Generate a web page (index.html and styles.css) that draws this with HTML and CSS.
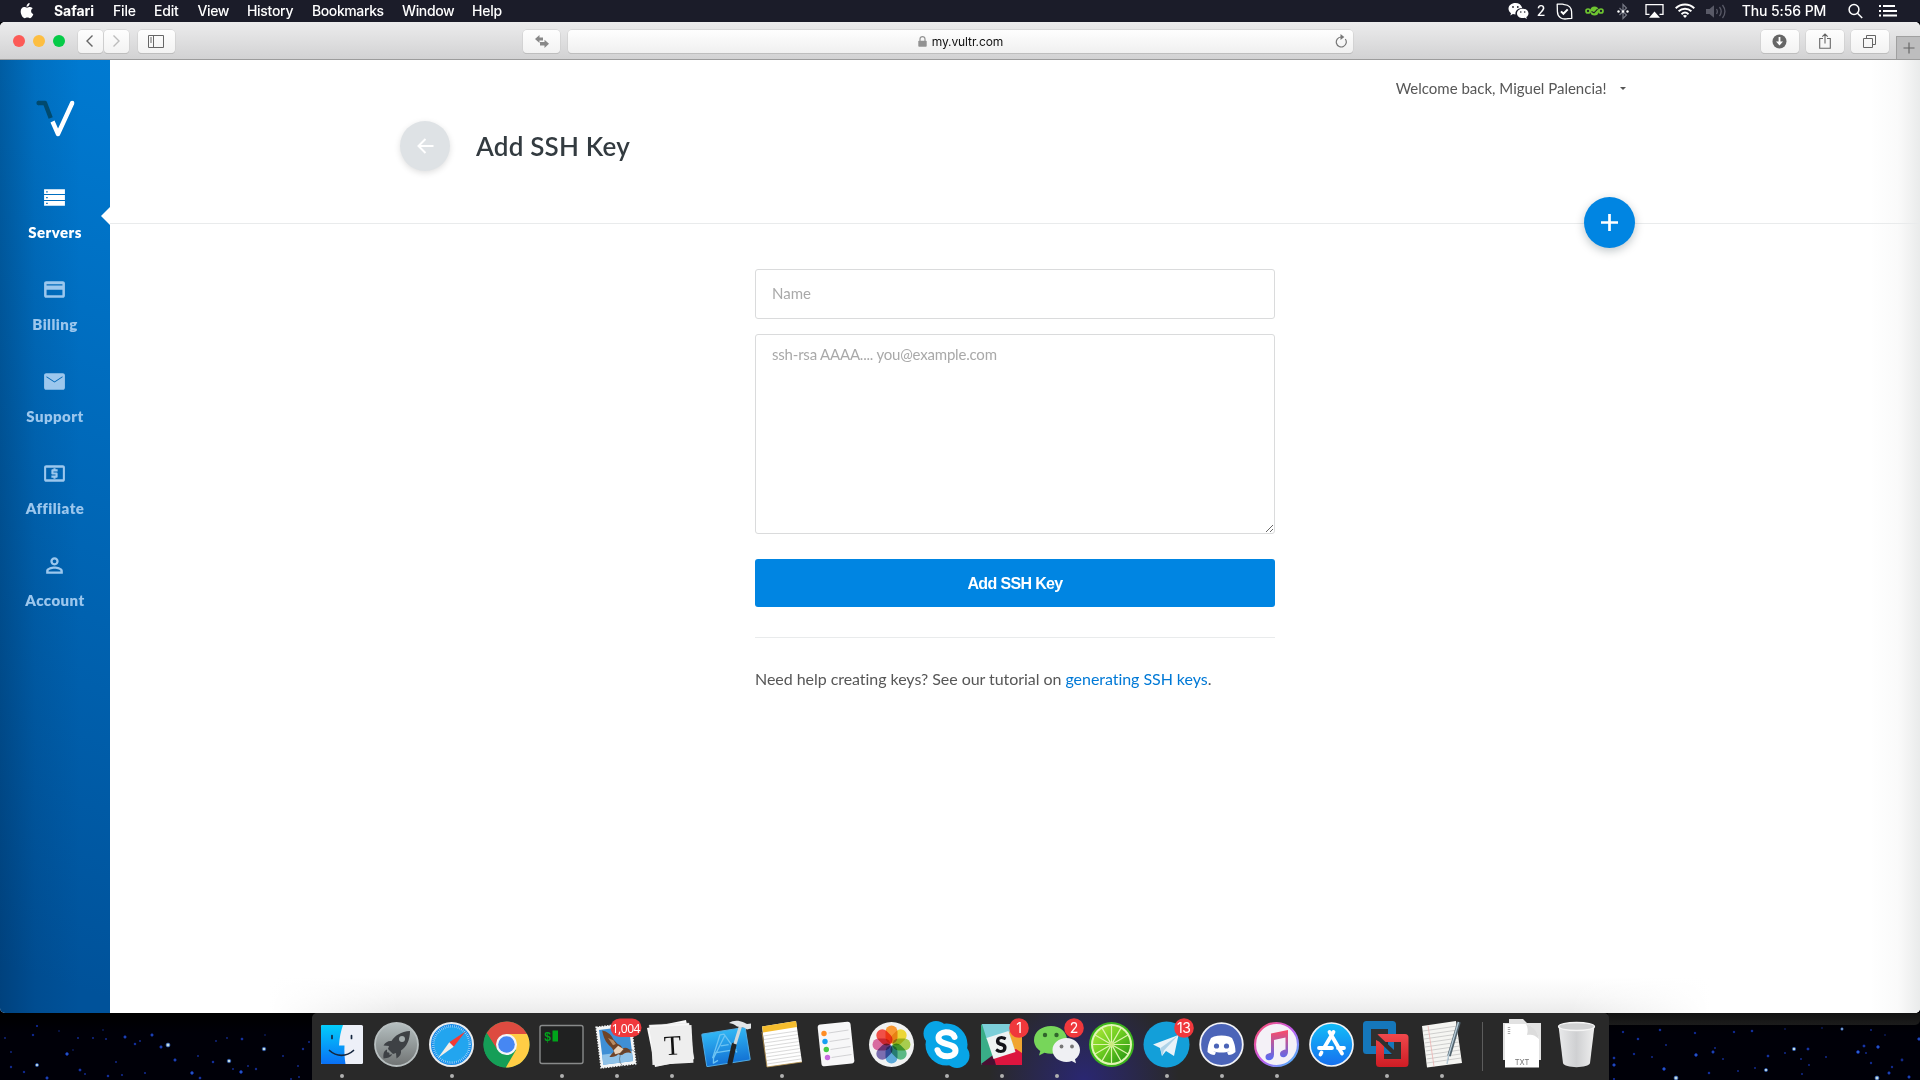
FILE: index.html
```html
<!DOCTYPE html>
<html lang="en">
<head>
<meta charset="utf-8">
<title>Add SSH Key - Vultr.com</title>
<link rel="stylesheet" href="styles.css">
</head>
<body>
<header class="menubar">
  <svg class="apple" width="14" height="16" viewBox="0 0 14 16"><path fill="#fff" d="M9.6 0c.1 1.100-.3 2-.9 2.700-.6.700-1.400 1.200-2.200 1.100-.1-1 .3-1.900.9-2.600C8 .5 8.900.1 9.600 0zM12.800 5.300c-1.100.7-1.700 1.600-1.700 2.800 0 1.500.8 2.600 2.200 3.100-.5 1.500-1.900 4-3.300 4-.9 0-1.400-.6-2.600-.6s-1.700.6-2.600.6C2.900 15.200.6 11.400.7 8.200.8 5.700 2.300 4.100 4.200 4c1.100 0 2 .7 2.900.7S9 3.900 10.200 4c1.100.1 2 .5 2.600 1.300z"/></svg>
  <nav class="menus">
    <b class="m-safari">Safari</b><span class="m-file">File</span><span class="m-edit">Edit</span><span class="m-view">View</span><span class="m-history">History</span><span class="m-bookmarks">Bookmarks</span><span class="m-window">Window</span><span class="m-help">Help</span>
  </nav>
  <div class="tray">
    <span class="t28"><svg width="21" height="18" viewBox="0 0 21 18"><path fill="#fff" d="M7.500 1C3.400 1 .5 3.600.5 6.800c0 1.800 1 3.300 2.500 4.400L2.300 13.400l2.600-1.300c.9.3 1.700.4 2.600.4C7 9 9.500 6 14.200 5.900 13.500 3 10.800 1 7.500 1z"/><path fill="#fff" d="M20.500 11.400c0-2.700-2.600-4.700-5.700-4.700S9 8.700 9 11.400s2.600 4.700 5.800 4.700c.7 0 1.400-.1 2-.3l2 1.100-.5-1.800c1.300-.9 2.200-2.200 2.200-3.700z"/><g fill="#1b1c29"><circle cx="5" cy="5" r=".9"/><circle cx="9.800" cy="5" r=".9"/><circle cx="12.800" cy="10" r=".8"/><circle cx="16.700" cy="10" r=".8"/></g></svg></span>
    <span class="t18">2</span>
    <span class="t30"><svg width="17" height="17" viewBox="0 0 17 17" fill="none" stroke="#fff" stroke-width="1.300"><path d="M1.200 1.200h5.300c.7 0 1.300.2 2 .4 4.300.2 7.300 3.200 7.100 7.600l.2 6.100-3.800.3c-6 1.500-10.500-1.500-10.600-7.100z" stroke-linejoin="round"/><path stroke-width="2" d="M5 8.400l2.400 2.400 4.300-4.400"/></svg></span>
    <span class="t29"><svg width="19" height="12" viewBox="0 0 19 12" fill="none" stroke="#6ec531" stroke-width="1.700"><circle cx="3" cy="6" r="2"/><circle cx="16" cy="6" r="2"/><circle cx="9.500" cy="6" r="4.500" fill="#6ec531" stroke="none"/><path stroke="#1b1c29" stroke-width="1.100" d="M6.500 6.500L9 7.800l3.600-3.600"/></svg></span>
    <span class="t29"><svg width="12" height="17" viewBox="0 0 12 17" fill="none" stroke="#777985" stroke-width="1.200"><path d="M2.500 5l7 7L6 15.500v-14L9.500 5l-7 7"/><g fill="#fff" stroke="none"><circle cx="1.500" cy="8.500" r="1.200"/><circle cx="6" cy="8.500" r="1.200"/><circle cx="10.500" cy="8.500" r="1.200"/></g></svg></span>
    <span class="t33"><svg width="19" height="16" viewBox="0 0 19 16"><path fill="none" stroke="#fff" stroke-width="1.300" d="M4.500 11.300H1V1.700h17v9.600h-3.500"/><path fill="#fff" d="M9.500 8.500l5.500 6.300H4z"/></svg></span>
    <span class="t29"><svg width="20" height="16" viewBox="0 0 20 16" fill="none" stroke="#fff" stroke-width="1.900"><path d="M.7 5.300c5.300-5 13.300-5 18.600 0M3.600 8.300c3.700-3.500 9.100-3.500 12.800 0M6.500 11.200c2.100-1.900 4.900-1.900 7 0"/><path fill="#fff" stroke="none" d="M7.900 12.700c1.300-1 2.900-1 4.200 0L10 15z"/></svg></span>
    <span class="t33"><svg width="21" height="17" viewBox="0 0 21 17" fill="none" stroke="#595a67" stroke-width="1.300"><path fill="#595a67" stroke="none" d="M0 6h3.500L8 2.200v12.600L3.500 11H0z"/><path d="M10.500 6c1 1.500 1 3.500 0 5M13.500 4c2 2.700 2 6.300 0 9M16.500 2c3 4 3 9 0 13"/></svg></span>
    <span class="t103 clock">Thu 5:56 PM</span>
    <span class="t39"><svg width="15" height="16" viewBox="0 0 15 16" fill="none" stroke="#fff" stroke-width="1.500"><circle cx="6" cy="6.500" r="4.900"/><path d="M9.500 10.200l4.700 4.900"/></svg></span>
    <span class="t26"><svg width="18" height="12" viewBox="0 0 18 12" fill="#fff"><path d="M0 0h2v2H0zM4 0h12v2H4zM0 5h2v2H0zM4 5h14v2H4zM0 9.500h2v2H0zM4 9.500h14v2H4z"/></svg></span>
  </div>
</header>

<div class="window">
  <div class="toolbar">
    <div class="lights"><i class="red"></i><i class="yellow"></i><i class="green"></i></div>
    <div class="navbtns">
      <span class="tb w25"><svg width="10" height="14" viewBox="0 0 10 14"><path fill="none" stroke="#666" stroke-width="1.400" d="M7.500 1.500L2 7l5.500 5.500"/></svg></span><span class="tb w25"><svg width="10" height="14" viewBox="0 0 10 14"><path fill="none" stroke="#bcbcbc" stroke-width="1.400" d="M2.500 1.500L8 7l-5.500 5.500"/></svg></span>
    </div>
    <span class="tb w38 sidebtn"><svg width="16" height="13" viewBox="0 0 16 13"><path fill="none" stroke="#666" d="M.5.500h15v12H.5zM5.500.500v12M2 3h2M2 5h2M2 7h2"/></svg></span>
    <span class="tb w38 swapbtn"><svg width="14" height="13" viewBox="0 0 14 13"><path fill="#888" d="M4.500 0v2.500H8v3H4.500V8L0 4zM9.500 4.800V7H5v3.500h4.500V13L14 8.800z"/></svg></span>
    <div class="url">
      <span class="addr"><svg width="9" height="11" viewBox="0 0 9 11"><path fill="none" stroke="#929292" stroke-width="1.200" d="M2 5V3a2.500 2.400 0 0 1 5 0v2"/><rect x=".3" y="4.700" width="8.400" height="6" rx=".8" fill="#929292"/></svg>my.vultr.com</span>
      <svg class="reload" width="12" height="14" viewBox="0 0 12 14"><path fill="none" stroke="#777" stroke-width="1.200" d="M10.300 5A5 5 0 1 1 6 3"/><path fill="#777" d="M5.500 0L9.300 3 5.500 6z"/></svg>
    </div>
    <div class="rightbtns">
      <span class="tb w39"><svg width="15" height="15" viewBox="0 0 15 15"><circle cx="7.500" cy="7.500" r="7" fill="#666"/><path fill="#fff" d="M6.600 3h1.800v4.500H11l-3.500 4-3.500-4h2.600z"/></svg></span>
      <span class="tb w39"><svg width="12" height="16" viewBox="0 0 12 16"><path fill="none" stroke="#666" stroke-width="1.100" d="M4 5.500H.7v9.800h10.600V5.500H8M6 10.500V1M3.300 3.700L6 1l2.700 2.700"/></svg></span>
      <span class="tb w39"><svg width="13" height="13" viewBox="0 0 13 13"><path fill="none" stroke="#666" d="M.5 3.500h9v9h-9zM3.500 3V.500h9v9H10"/></svg></span>
    </div>
    <span class="newtab"><svg width="12" height="12" viewBox="0 0 12 12"><path stroke="#666" stroke-width="1.200" d="M6 .5v11M.5 6h11"/></svg></span>
  </div>

  <div class="page">
    <aside class="sidebar">
      <svg class="logo" width="39" height="37" viewBox="0 0 39 37" fill="none" stroke-linejoin="round"><path stroke="#004a6e" stroke-width="4.400" d="M2.300 3H9l5.700 15" stroke-linecap="butt"/><circle cx="2.600" cy="3" r="2.200" fill="#004a6e"/><path stroke="#fff" stroke-width="4.400" d="M16.500 21.500L22 34l14.200-31"/><circle cx="36.200" cy="3" r="2.200" fill="#fff"/></svg>
      <nav class="sidenav">
        <a class="item active"><svg viewBox="0 0 24 24"><path d="M2 20h20v-4.700H2zm2-3h1.500v1.200H4zM2 4v4.700h20V4zm3.500 3.200H4V6h1.500zM2 14.400h20V9.700H2zm2-3h1.500v1.200H4z"/></svg>Servers</a>
        <a class="item"><svg viewBox="0 0 24 24"><path d="M20 4H4c-1.110 0-1.990.89-1.990 2L2 18c0 1.110.89 2 2 2h16c1.110 0 2-.89 2-2V6c0-1.110-.89-2-2-2zm-.4 13.500H4.400v-5.200h15.200zm0-9.300H4.400V6.900h15.200z"/></svg>Billing</a>
        <a class="item"><svg viewBox="0 0 24 24"><path d="M20 4H4c-1.100 0-2 .9-2 2v12c0 1.100.9 2 2 2h16c1.100 0 2-.9 2-2V6c0-1.100-.9-2-2-2zm-.3 4l-7.700 5-7.700-5V7l7.700 5 7.700-5z"/></svg>Support</a>
        <a class="item"><svg viewBox="0 0 24 24"><path d="M11 17h2v-1h1c.55 0 1-.45 1-1v-3c0-.55-.45-1-1-1h-3v-1h4V8h-2V7h-2v1h-1c-.55 0-1 .45-1 1v3c0 .55.45 1 1 1h3v1H9v2h2zm9-13H4c-1.110 0-1.990.89-1.990 2L2 18c0 1.110.89 2 2 2h16c1.110 0 2-.89 2-2V6c0-1.110-.89-2-2-2zm0 13.600H4V6.400h16z"/></svg>Affiliate</a>
        <a class="item"><svg viewBox="0 0 24 24"><path d="M12 6.200a1.800 1.800 0 1 1 0 3.600 1.800 1.800 0 0 1 0-3.600m0 9c2.970 0 5.700 1.260 5.700 1.900v.7H6.300v-.7c0-.64 2.730-1.900 5.700-1.900M12 4C9.790 4 8 5.790 8 8s1.790 4 4 4 4-1.790 4-4-1.790-4-4-4zm0 9c-2.670 0-8 1.340-8 4v3h16v-3c0-2.660-5.330-4-8-4z"/></svg>Account</a>
      </nav>
    </aside>
    <main class="main">
      <div class="head">
        <div class="container">
          <div class="welcome"><span>Welcome back, Miguel Palencia!</span><i class="caret"></i></div>
          <div class="titlerow">
            <a class="back"><svg width="17" height="16" viewBox="0 0 17 16"><path fill="none" stroke="#fff" stroke-width="2" d="M16.500 8H2M8.500 1L1.500 8l7 7"/></svg></a>
            <h1>Add SSH Key</h1>
          </div>
          <a class="fab"><svg width="17" height="17" viewBox="0 0 17 17"><path stroke="#fff" stroke-width="2.700" d="M8.500 0v17M0 8.500h17"/></svg></a>
        </div>
      </div>
      <form class="form">
        <input class="field" type="text" placeholder="Name">
        <textarea class="field area" placeholder="ssh-rsa AAAA.... you@example.com"></textarea>
        <button class="submit" type="button">Add SSH Key</button>
        <p class="help">Need help creating keys? See our tutorial on <a>generating SSH keys</a>.</p>
      </form>
    </main>
  </div>
</div>

<footer class="desktop">
  <svg class="stars" width="1920" height="67" viewBox="0 0 1920 67">
    <g fill="#122a8c">
      <circle cx="11" cy="39" r=".9"/><circle cx="5" cy="25" r=".9"/><circle cx="78" cy="25" r="1"/><circle cx="93" cy="25" r="1"/><circle cx="106" cy="26" r="1"/><circle cx="103" cy="17" r=".8"/><circle cx="59" cy="18" r=".8"/><circle cx="73" cy="37" r=".8"/><circle cx="116" cy="49" r="1"/><circle cx="85" cy="61" r="1"/><circle cx="122" cy="62" r="1.100"/><circle cx="11" cy="54" r="1.200"/><circle cx="145" cy="60" r="1.100"/><circle cx="140" cy="28" r="1"/><circle cx="198" cy="43" r="1"/><circle cx="216" cy="28" r=".9"/><circle cx="227" cy="25" r=".9"/><circle cx="248" cy="53" r="1"/><circle cx="256" cy="56" r="1.200"/><circle cx="233" cy="56" r="1"/><circle cx="283" cy="43" r="1"/><circle cx="298" cy="53" r="1"/><circle cx="303" cy="36" r="1.200"/><circle cx="309" cy="29" r="1"/><circle cx="299" cy="64" r="1"/><circle cx="265" cy="22" r=".8"/><circle cx="291" cy="66" r="1"/>
      <circle cx="1666" cy="32" r="1"/><circle cx="1715" cy="35" r="1"/><circle cx="1723" cy="46" r="1"/><circle cx="1738" cy="58" r="1"/><circle cx="1755" cy="55" r="1"/><circle cx="1785" cy="40" r="1"/><circle cx="1801" cy="46" r="1"/><circle cx="1802" cy="61" r="1"/><circle cx="1809" cy="52" r="1"/><circle cx="1826" cy="44" r="1"/><circle cx="1822" cy="15" r=".8"/><circle cx="1785" cy="16" r=".8"/><circle cx="1866" cy="40" r="1"/><circle cx="1871" cy="50" r="1.200"/><circle cx="1902" cy="47" r="1.400"/><circle cx="1892" cy="54" r="1.200"/><circle cx="1871" cy="17" r="1"/><circle cx="1652" cy="44" r="1"/><circle cx="1885" cy="22" r=".8"/>
    </g>
    <g fill="#3c7fd6" stroke="#0a1f9a" stroke-width=".9">
      <circle cx="37" cy="13" r=".7"/><circle cx="33" cy="22" r=".8"/><circle cx="67" cy="41" r="1.400"/><circle cx="125" cy="24" r="1.200"/><circle cx="135" cy="31" r=".9"/><circle cx="152" cy="22" r="1.200"/><circle cx="161" cy="34" r="1.200"/><circle cx="175" cy="47" r="1.200"/><circle cx="80" cy="57" r="1.100"/><circle cx="108" cy="63" r=".9"/><circle cx="47" cy="65" r="1.200"/><circle cx="24" cy="59" r=".8"/><circle cx="192" cy="60" r="1.400"/><circle cx="200" cy="65" r="1"/><circle cx="213" cy="49" r=".9"/><circle cx="242" cy="26" r="1"/><circle cx="241" cy="59" r="1.400"/>
      <circle cx="1614" cy="45" r="1"/><circle cx="1614" cy="52" r="1.300"/><circle cx="1614" cy="66" r=".7"/><circle cx="1623" cy="19" r=".8"/><circle cx="1638" cy="26" r=".9"/><circle cx="1660" cy="17" r=".9"/><circle cx="1695" cy="20" r=".8"/><circle cx="1696" cy="42" r="1.400"/><circle cx="1713" cy="39" r="1.200"/><circle cx="1664" cy="56" r="1.400"/><circle cx="1634" cy="41" r=".8"/><circle cx="1709" cy="60" r=".9"/><circle cx="1734" cy="19" r=".8"/><circle cx="1752" cy="18" r=".9"/><circle cx="1768" cy="43" r="1"/><circle cx="1808" cy="36" r="1.100"/><circle cx="1858" cy="39" r="1.500"/><circle cx="1864" cy="33" r="1.100"/><circle cx="1878" cy="34" r="1.400"/><circle cx="1889" cy="60" r="1.200"/><circle cx="1909" cy="64" r="1.200"/><circle cx="1919" cy="26" r="1.300"/>
    </g>
    <g fill="#c4dce0" stroke="#1b4fb4" stroke-width=".7"><circle cx="37" cy="52" r="1.600"/><circle cx="168" cy="32" r="2"/><circle cx="229" cy="48" r="1.800"/><circle cx="264" cy="36" r="1.800"/><circle cx="1676" cy="65" r="2"/><circle cx="1766" cy="57" r="1.600"/><circle cx="1794" cy="36" r="1.700"/><circle cx="1842" cy="16" r="1.200"/><circle cx="1877" cy="65" r="2"/></g>
  </svg>
  <div class="edge"></div>
  <div class="dock">
    <span class="app run"><svg viewBox="0 0 55 67"><defs><linearGradient id="fb" x2="0" y2="1"><stop stop-color="#02cdfb"/><stop offset="1" stop-color="#0a70f5"/></linearGradient></defs><rect x="7" y="12" width="42" height="39" rx="1.500" fill="#edf0f8"/><path fill="url(#fb)" d="M8.500 12H29c-2 6-3.500 12-4 20.500h5.500C30.200 38 30.500 45 31.500 51h-23A1.500 1.500 0 0 1 7 49.500v-36A1.500 1.500 0 0 1 8.500 12z"/><path fill="none" stroke="#15263f" stroke-width="1.700" stroke-linecap="round" d="M18 22.500v3M37.500 22.500v3M15.500 37.500c7 6.500 17 6.500 24 0"/></svg></span>
    <span class="app"><svg viewBox="0 0 55 67"><defs><linearGradient id="lp" x2="0" y2="1"><stop stop-color="#b5bfc0"/><stop offset="1" stop-color="#707373"/></linearGradient></defs><circle cx="27.500" cy="31.500" r="21.500" fill="url(#lp)" stroke="#b8bfc0" stroke-width="1.800"/><path fill="#3e4145" d="M41 18c-9 .5-15 4.500-18.500 10-3-.5-6 1-8 4.500l5.500.500-1 3 5 5 3-1 .5 5.500c3.500-2 5-5 4.500-8C37.500 34 41 27 41 18zM18 36.500c-3 1-4 4-3.500 9 4.500-.5 8-1.500 8.500-4.500l-2.500 1c.5-2-1-3-2.500-2.500z"/><circle cx="33" cy="26" r="3" fill="#a3abac"/></svg></span>
    <span class="app run"><svg viewBox="0 0 55 67"><circle cx="27.500" cy="31.500" r="21.500" fill="#168bea" stroke="#e9ebed" stroke-width="2"/><circle cx="27.500" cy="31.500" r="18" fill="#22a5ef"/><circle cx="27.500" cy="31.500" r="18.300" fill="none" stroke="#c0e4fb" stroke-width="2.500" stroke-dasharray=".6 1.320"/><path fill="#f33a34" d="M41.500 18.500L25.300 29.300l4.400 4.400z"/><path fill="#f3eee8" d="M14 45l11.300-15.700 4.400 4.400z"/></svg></span>
    <span class="app"><svg viewBox="0 0 55 67"><circle cx="27.500" cy="31.500" r="23" fill="#159e57"/><path fill="#ffcd45" d="M27.500 21h20.500a23 23 0 0 1-21.200 33.500L37 37z"/><path fill="#dd4b40" d="M7.600 20A23 23 0 0 1 48 21H27.500L18.400 36.800z"/><path fill="#159e57" d="M7.600 20l10.800 17 9.100 5 5 0-6 12.500A23 23 0 0 1 7.600 20z"/><circle cx="27.500" cy="31.500" r="10.500" fill="#f3f5f8"/><circle cx="27.500" cy="31.500" r="8.300" fill="#4687f3"/></svg></span>
    <span class="app run"><svg viewBox="0 0 55 67"><rect x="6" y="12.500" width="43" height="38" rx="2" fill="#202121" stroke="#888a8a" stroke-width="1.400"/><text x="10" y="27.500" class="term">$</text><rect x="18.500" y="17.500" width="5.500" height="11" fill="#00a51b"/></svg></span>
    <span class="app run"><svg viewBox="0 0 55 67"><g transform="rotate(-7 27 32)"><rect x="9.500" y="12" width="35" height="41" fill="#f4f6f7" stroke="#f4f6f7" stroke-width="1.600" stroke-dasharray="1.500 1.200"/><path fill="#3f8fd5" d="M12 15h30v35H12z"/><path fill="#8fc2e8" d="M12 40h30v10H12z"/><path fill="#6f4327" d="M15 16c5 1.500 8.500 5 10 10l3.500 5c2 1 3.500 2.500 4.500 5 4-1 7 1 8.500 6-2.500-1.500-5-1.500-7.500-.5-2 1.500-4 1.500-6 0-2.500 2-5.500 2.500-9 1.500 1.500-1.500 3-3 5-4.500-.5-2.500-1.500-4.500-3.500-6.500-3.500-4-5-9-5.500-16z"/><path fill="#e8d3bb" d="M24 37l5-4 5 4-4 3.500-5 .5z"/><path fill="#b98c62" d="M20 24l5 3 2 4-3 1z"/></g><circle cx="40" cy="46" r="9.500" fill="none" stroke="#39444c" opacity=".5"/><rect x="21.500" y="5.500" width="31" height="18.500" rx="9.250" fill="#f0383c"/><text x="36.800" y="19.700" class="badge long">1,004</text></svg></span>
    <span class="app run"><svg viewBox="0 0 55 67"><path fill="#fafafa" d="M3 15l39-8 8 39-39 8z"/><path fill="#f7f7f7" stroke="#ccc" stroke-width=".3" d="M5 12l40-2 5 36-37 7z"/><rect x="7.500" y="13" width="41" height="38" fill="#eee" transform="rotate(-3 27 32)"/><text x="28.500" y="42" class="tee" transform="rotate(-3 27 32)">T</text></svg></span>
    <span class="app"><svg viewBox="0 0 55 67"><defs><linearGradient id="xc" x2="0" y2="1"><stop stop-color="#30b6f4"/><stop offset="1" stop-color="#1372d4"/></linearGradient></defs><g transform="rotate(-9 27 34)"><rect x="5" y="17.500" width="44" height="33" rx="1" fill="url(#xc)" stroke="#4faae3"/><path fill="none" stroke="#6dc4f3" stroke-width="1.300" stroke-linejoin="round" d="M12 43l11-22h4l10 20M15 38h22M17 46l-5 2 1-5L28 22M22 32l8 0"/></g><path stroke="#212325" stroke-width="5" stroke-linecap="round" d="M31 50l4-18"/><path stroke="#d1d8da" stroke-width="3.200" d="M36 31l5.500-18"/><path fill="#e3e6e8" d="M30 10c4-2.500 9-3 15-.5l3 1.500 4-.5v5l-4 1-3-2-7-1c-3-2.500-5-3-8-3.500z"/></svg></span>
    <span class="app run"><svg viewBox="0 0 55 67"><path fill="#fff" d="M8 13.500l34-5.500 6 41-35 5z"/><path fill="#f5bd2e" d="M8 13.500L42 8l1 6-34 5.500z"/><path stroke="#d0d0d0" stroke-width=".8" d="M9 23l34-5M10 26.500l34-5M10 30l34-5M11 33.500l34-5M11 37l34-5M12 40.500l34-5M12 44l34-5M13 47.500l34-5M13 51l34-5"/><path fill="none" stroke="#b6924a" stroke-width=".8" d="M8 19l5 35 35-5"/></svg></span>
    <span class="app"><svg viewBox="0 0 55 67"><rect x="10.500" y="10" width="33" height="42" rx="3" fill="#f7f7f8" transform="rotate(-6 27 31)"/><path stroke="#c8c8ca" stroke-width=".8" d="M19.500 20l20-3M20.500 28.500l20-3M21.500 36.500l20-3M22.500 44.500l20-3"/><circle cx="15" cy="20.500" r="2.700" fill="#ff8d24"/><circle cx="16" cy="28.500" r="2.700" fill="#169ff3"/><circle cx="17.300" cy="36.500" r="2.700" fill="#45cb46"/><circle cx="18.500" cy="44.500" r="2.700" fill="#c668df"/></svg></span>
    <span class="app"><svg viewBox="0 0 55 67"><circle cx="27.500" cy="31.500" r="22.500" fill="#f1f2f2"/><g transform="translate(27.500 31.500)" class="petals"><rect x="-6" y="-19" width="12" height="18" rx="6" fill="#fa9428"/><rect x="-6" y="-19" width="12" height="18" rx="6" fill="#ecd52e" transform="rotate(45)"/><rect x="-6" y="-19" width="12" height="18" rx="6" fill="#a5cc46" transform="rotate(90)"/><rect x="-6" y="-19" width="12" height="18" rx="6" fill="#54b580" transform="rotate(135)"/><rect x="-6" y="-19" width="12" height="18" rx="6" fill="#55a6d8" transform="rotate(180)"/><rect x="-6" y="-19" width="12" height="18" rx="6" fill="#7567ad" transform="rotate(225)"/><rect x="-6" y="-19" width="12" height="18" rx="6" fill="#d7649b" transform="rotate(270)"/><rect x="-6" y="-19" width="12" height="18" rx="6" fill="#f0483e" transform="rotate(315)"/></g></svg></span>
    <span class="app run"><svg viewBox="0 0 55 67"><g fill="#08a5e7"><circle cx="27.500" cy="31.500" r="21"/><circle cx="17" cy="20.500" r="12.500"/><circle cx="38" cy="42.500" r="12.500"/></g><path fill="none" stroke="#fff" stroke-width="6" stroke-linecap="round" d="M35.500 24c-2.500-7-16-6-16 .8 0 8 17 4.500 17 12.700 0 7.500-15.500 8-18-.3"/></svg></span>
    <span class="app run"><svg viewBox="0 0 55 67"><rect x="7" y="11" width="41" height="41" rx="1.500" fill="#39ad87"/><path fill="#7ccfd9" d="M8 11h32l-2 9-25 7z"/><path fill="#f0a531" d="M40 11h8v30l-7-2-6-19z"/><path fill="#dc153f" d="M18 43l24-7 6 4v12H22z"/><path fill="#471032" d="M7 51l12-9 3 10H8.500z"/><path fill="#eef3f3" d="M12.500 25l22-7 7 21-22 7z"/><text x="27" y="39.500" class="slack">S</text><circle cx="45" cy="15" r="9.800" fill="#f0383c"/><text x="44.800" y="20" class="badge">1</text></svg></span>
    <span class="app run"><svg viewBox="0 0 55 67"><path fill="#77d65a" d="M22 13C13 13 5 18.500 5 27c0 4.600 2.500 8.500 6.300 11L10 42.500l5.500-2.800c2 .7 4.300 1 6.500 1C31 41 38 35 38 27S31 13 22 13z"/><path fill="#eff0f3" d="M37.500 25C30 25 23.500 30 23.500 37S30 49 37.500 49c1.800 0 3.600-.3 5.200-1l4.300 2.300-1-4C49 44 51 41 51 37c0-7-6-12-13.500-12z"/><g fill="#31652c"><circle cx="16" cy="22" r="2.200"/><circle cx="27.500" cy="22" r="2.200"/></g><g fill="#777"><circle cx="32.500" cy="33.500" r="1.900"/><circle cx="43" cy="33.500" r="1.900"/></g><circle cx="45" cy="15" r="9.800" fill="#f0383c"/><text x="44.800" y="20" class="badge">2</text></svg></span>
    <span class="app"><svg viewBox="0 0 55 67"><defs><linearGradient id="lm" x2="1" y2="1"><stop stop-color="#b5ea3c"/><stop offset=".45" stop-color="#6fce21"/><stop offset="1" stop-color="#1f8f12"/></linearGradient></defs><circle cx="27.500" cy="31.500" r="22.500" fill="#3cb51c"/><circle cx="27.500" cy="31.500" r="20.500" fill="#e3f5b6"/><circle cx="27.500" cy="31.500" r="18.500" fill="url(#lm)"/><g stroke="#dff4ad" stroke-width="1.200"><path d="M27.500 12v39M10.600 21.800l33.800 19.400M10.600 41.200l33.800-19.400M8 31.500h39M17.800 14.600l19.400 33.800M37.200 14.600L17.800 48.400"/></g><circle cx="27.500" cy="31.500" r="2.500" fill="#cceb80"/></svg></span>
    <span class="app run"><svg viewBox="0 0 55 67"><circle cx="27.500" cy="31.500" r="23" fill="#139fd9"/><path fill="#e9f3f9" d="M14 31.500L39.500 22 35 43l-8-5-4 5-2-8z"/><path fill="#afd3e8" d="M21.500 35L39.500 22 25 37.500 23 43z"/><circle cx="45" cy="15" r="9.800" fill="#f0383c"/><text x="44.800" y="20" class="badge">13</text></svg></span>
    <span class="app run"><svg viewBox="0 0 55 67"><circle cx="27.500" cy="31.500" r="21.300" fill="#4b64b8" stroke="#f2f3f8" stroke-width="1.800"/><path fill="#fff" d="M20 23.500c5-1.500 10-1.500 15 0l3 1.500c2.500 5 3.500 9 3.500 14-2 2-4.500 3-7 3l-1.500-2.500 3-1.500c-5 2-12 2-17 0l3 1.500-1.500 2.500c-2.500 0-5-1-7-3 0-5 1-9 3.500-14z"/><g fill="#4b64b8"><circle cx="22.500" cy="33" r="2.600"/><circle cx="32.500" cy="33" r="2.600"/></g></svg></span>
    <span class="app run"><svg viewBox="0 0 55 67"><defs><linearGradient id="it" x2="1" y2="1"><stop stop-color="#ff4d63"/><stop offset=".5" stop-color="#c55bef"/><stop offset="1" stop-color="#37c1fc"/></linearGradient><linearGradient id="nt" x2="0" y2="1"><stop stop-color="#fc4b66"/><stop offset="1" stop-color="#526cf6"/></linearGradient></defs><circle cx="27.500" cy="31.500" r="21.500" fill="#f4f1f7" stroke="url(#it)" stroke-width="2.200"/><path fill="url(#nt)" d="M22 20.500l17-3.500v21.500c0 7-8 7.500-8 2.500 0-4 5-4 5.500-4.500V24.500L25 27v14.500c0 7-8.500 7.500-8.500 2.500 0-4 5-3.500 5.500-4.500z"/></svg></span>
    <span class="app"><svg viewBox="0 0 55 67"><defs><linearGradient id="as" x2="0" y2="1"><stop stop-color="#12bef8"/><stop offset="1" stop-color="#166fef"/></linearGradient></defs><circle cx="27.500" cy="31.500" r="21.500" fill="url(#as)" stroke="#f1f3f5" stroke-width="1.700"/><path fill="none" stroke="#fff" stroke-width="3.800" stroke-linecap="round" d="M15 35h13M34 35h6M29.500 19L20 35M25.500 19L38 40.500M17.500 39.500l-1 2"/></svg></span>
    <span class="app run"><svg viewBox="0 0 55 67"><defs><linearGradient id="vr" x2="0" y2="1"><stop stop-color="#f0484c"/><stop offset="1" stop-color="#cf1c24"/></linearGradient></defs><path fill="#1577bb" fill-rule="evenodd" d="M7.500 8h26q3.500 0 3.500 3.500v26q0 3.500-3.500 3.500h-26Q4 41 4 37.500v-26Q4 8 7.500 8zm4.500 8v17h17V16z"/><path fill="url(#vr)" fill-rule="evenodd" d="M20.500 21H46q3.500 0 3.500 3.500v26q0 3.500-3.500 3.500H20.500q-3.500 0-3.500-3.500v-26q0-3.500 3.500-3.500zM25 29v17h17V29z"/><path fill="#30302f" d="M12 16h17v5H18l17 16v-8h7v17H25v-4h9L20 28.500 17 27v6h-5z"/></svg></span>
    <span class="app run"><svg viewBox="0 0 55 67"><path fill="#f5f5f2" d="M8 13l34-5 6 42-35 4.500z"/><path stroke="#bdbdbd" stroke-width=".7" d="M9 18l34-5M9.500 22l34-5M10 26l34-5M10.500 30l34-5M11 34l34-5M11.500 38l34-5M12 42l34-5M12.500 46l34-5M13 50l34-5"/><path stroke="#eda9a9" stroke-width=".7" d="M14 12.500l6 41"/><path stroke="#50616b" stroke-width="3.600" d="M45 9L35 43"/><path stroke="#b6cbd8" stroke-width="1.400" d="M44.500 9l-10 34-1.500 8"/></svg></span>
    <span class="sep"></span>
    <span class="app"><svg viewBox="0 0 55 67"><path fill="#e2e2e2" d="M15 6h14l4 4h14v37H9V10h6z"/><path fill="#fff" d="M11 11h21c7 2 12 8 13 15v28.500H11z"/><path fill="#dcdcdc" d="M32 11c2 3 2 7 1 11 5-1 8 0 12 4-1-8-6-13-13-15z"/><path stroke="#aaa" stroke-dasharray="1 1" stroke-width="2.500" d="M15 14v8"/><text x="28" y="51.500" class="txt">TXT</text></svg></span>
    <span class="app"><svg viewBox="0 0 55 67"><defs><linearGradient id="tr"><stop stop-color="#e9eaeb"/><stop offset=".5" stop-color="#cfd0d2"/><stop offset="1" stop-color="#efefef"/></linearGradient></defs><path fill="url(#tr)" d="M9.500 13h36l-4.500 37c-1 5.500-26 5.500-27 0z"/><ellipse cx="27.500" cy="13.500" rx="18" ry="4" fill="#d0d1d2" stroke="#f5f5f5" stroke-width="1.300"/></svg></span>
  </div>
</footer>
</body>
</html>
```
FILE: styles.css
```css
* { box-sizing: border-box; }

body {
  margin: 0;
  width: 1920px;
  height: 1080px;
  overflow: hidden;
  display: flex;
  flex-direction: column;
  background: #000005;
  font-family: Lato, "Open Sans", sans-serif;
  font-variant-ligatures: none;
  color: #575757;
}

svg { display: block; flex: none; }

/* Menu bar */
.menubar {
  flex: 0 0 22px;
  display: flex;
  align-items: center;
  padding-left: 20px;
  background: #1b1c29;
  color: #fff;
  font: 450 14px/22px Inter, "Liberation Sans", sans-serif;
}
.apple { margin-right: 20px; }
.menus { display: flex; white-space: nowrap; }
.menus span, .menus b { letter-spacing: -0.2px; font-weight: 450; }
.menus .m-safari { width: 59px; font-weight: 700; letter-spacing: -0.05px; }
.m-file { width: 41px; }
.m-edit { width: 43.500px; }
.menus .m-view { width: 49.500px; letter-spacing: -.4px; }
.menus .m-history { width: 65px; letter-spacing: -.3px; }
.menus .m-bookmarks { width: 90px; letter-spacing: -.4px; }
.menus .m-window { width: 70px; letter-spacing: -.35px; }
.tray { display: flex; margin-left: auto; padding-right: 19.500px; height: 22px; }
.tray span { display: flex; align-items: center; justify-content: center; white-space: nowrap; }
.t18 { width: 17px; }
.t26 { width: 26px; }
.t28 { width: 28px; }
.t29 { width: 29px; }
.t30 { width: 30px; }
.t33 { width: 33px; }
.t39 { width: 39px; }
.t103 { width: 103px; }
.clock { letter-spacing: -.1px; }

/* Browser window */
.window {
  flex: 0 0 991px;
  display: flex;
  flex-direction: column;
  border-radius: 5px;
  overflow: hidden;
  background: #fff;
}
.toolbar {
  flex: 0 0 38px;
  display: flex;
  align-items: flex-start;
  padding: 7.500px 0 0 13px;
  border-bottom: 1px solid #9c9c9c;
  background: linear-gradient(#ececed, #d2d2d3);
}
.lights { display: flex; gap: 8px; padding-top: 5.500px; margin-right: 12.500px; }
.lights i { width: 12px; height: 12px; border-radius: 50%; }
.red { background: #fc5b57; }
.yellow { background: #fdbe41; }
.green { background: #05cb47; }
.tb {
  display: flex;
  align-items: center;
  justify-content: center;
  height: 23px;
  border-radius: 4px;
  background: linear-gradient(#fefefe, #f2f2f2);
  box-shadow: 0 0 0 .5px #cacaca, 0 1px 0 #b2b2b2;
}
.navbtns { display: flex; gap: 1px; }
.w25 { width: 25px; }
.w38 { width: 37px; }
.w39 { width: 38px; }
.sidebtn { margin-left: 9px; }
.swapbtn { margin-left: 348.500px; }
.url {
  display: flex;
  align-items: center;
  width: 785px;
  height: 23px;
  margin-left: 8px;
  padding: 0 6px 0 18px;
  border-radius: 4px;
  background: linear-gradient(#fefefe, #f0f0f0);
  box-shadow: 0 0 0 .5px #cacaca, 0 1px 0 #b2b2b2;
}
.addr {
  flex: 1;
  display: flex;
  align-items: center;
  justify-content: center;
  gap: 5px;
  padding-top: 1px;
  color: #111;
  font: 400 12px/22px Inter, "Liberation Sans", sans-serif;
  letter-spacing: -.1px;
}
.rightbtns { display: flex; gap: 7px; margin-left: 407.500px; }
.newtab {
  display: flex;
  align-items: center;
  justify-content: center;
  width: 24px;
  height: 23px;
  margin: 6.500px 0 0 auto;
  border: 1px solid #a0a0a0;
  border-width: 1px 0 0 1px;
  background: #bdbdbe;
}

/* Page */
.page { flex: 1; display: flex; }
.sidebar {
  flex: 0 0 110px;
  background:
    linear-gradient(90deg, rgba(0, 28, 60, .3), rgba(0, 28, 60, .1) 35px, transparent 80px),
    linear-gradient(198deg, #007ad1, #00529a 95%);
}
.logo { margin: 40px 0 0 36px; }
.sidenav { margin-top: 43px; }
.item {
  position: relative;
  display: flex;
  flex-direction: column;
  align-items: center;
  height: 92px;
  padding-top: 5px;
  color: #9cc7ed;
  font-weight: 800;
  font-size: 15px;
  line-height: 20px;
  letter-spacing: .45px;
}
.item svg { width: 25px; height: 25px; margin: 0 1px 12px 0; fill: #9cc7ed; }
.item.active { color: #fff; }
.item.active svg { fill: #fff; }
.item.active::after {
  content: "";
  position: absolute;
  right: 0;
  top: 27px;
  border: solid transparent;
  border-width: 9px 9px 9px 0;
  border-right-color: #fff;
}
.main {
  flex: 1;
  background:
    linear-gradient(270deg, rgba(90, 100, 100, .13), rgba(90, 100, 100, .03) 22px, transparent 50px),
    linear-gradient(90deg, #fff 160px, transparent 290px, transparent 1460px, #fff 1600px),
    linear-gradient(0deg, #ebebeb, #f6f6f6 16px, #fff 36px);
}
.head { height: 164px; border-bottom: 1px solid #e9ebec; }
.container { position: relative; width: 1230px; margin: 0 auto; }
.welcome {
  display: flex;
  align-items: center;
  justify-content: flex-end;
  height: 30px;
  padding-right: 4px;
  transform: translateY(13px);
  font-size: 15px;
}
.caret { margin-left: 13.500px; border: solid transparent; border-width: 3.500px 3.500px 0; border-top-color: #555; }
.titlerow { display: flex; align-items: center; gap: 26px; margin-top: 31px; }
.back {
  display: flex;
  align-items: center;
  justify-content: center;
  width: 50px;
  height: 50px;
  border-radius: 50%;
  background: #dee2e5;
  box-shadow: 0 2px 6px rgba(0, 0, 0, .13);
}
h1 {
  margin: 0;
  padding-bottom: 1px;
  font-size: 26px;
  line-height: 32px;
  font-weight: 600;
  letter-spacing: .2px;
  color: #333b40;
}
.fab {
  position: absolute;
  right: -5px;
  top: 137px;
  width: 51px;
  height: 51px;
  display: flex;
  align-items: center;
  justify-content: center;
  border-radius: 50%;
  background: #0085e2;
  box-shadow: 0 3px 10px rgba(0, 30, 40, .26);
}
.form { display: flex; flex-direction: column; width: 520px; margin: 45px auto 0; }
.field {
  height: 50px;
  padding: 0 16px 2px;
  border: 1px solid #dadbdc;
  border-radius: 3px;
  background: #fff;
  outline: 0;
  font: 400 15px/20px Lato, sans-serif;
  font-variant-ligatures: none;
}
.field::placeholder { color: #a9a9a9; opacity: 1; }
.area { height: 200px; margin-top: 15px; padding-top: 9px; resize: both; letter-spacing: -.2px; }
.submit {
  height: 48px;
  margin-top: 25px;
  border: 0;
  border-radius: 3px;
  background: #0085e2;
  color: #fff;
  font: 700 16px/48px "Liberation Sans", Arial, sans-serif;
  letter-spacing: -.65px;
}
.help {
  margin: 30px 0 0;
  padding-top: 30px;
  border-top: 1px solid #e9ebec;
  font-size: 16px;
  line-height: 22px;
  letter-spacing: -.05px;
  white-space: nowrap;
}
.help a { color: #0079d6; }

/* Desktop and dock */
.desktop { position: relative; flex: 0 0 67px; padding-left: 312px; background: linear-gradient(#000, #000008 20px); }
.stars { position: absolute; inset: 0; }
.edge {
  position: absolute;
  right: 0;
  top: 0;
  width: 312px;
  height: 12px;
  border-radius: 0 0 5px 0;
  background: linear-gradient(#111, #1c1c1c);
}
.dock {
  position: relative;
  display: flex;
  width: 1297px;
  height: 67px;
  padding-left: 2px;
  border-radius: 5px 5px 0 0;
  background: radial-gradient(circle at 772px 67px, #2a2772, #292929 95px);
}
.app { position: relative; flex: 0 0 55px; height: 67px; }
.app svg { width: 55px; height: 67px; }
.petals { opacity: .95; }
.petals rect { mix-blend-mode: multiply; }
.run::after {
  content: "";
  position: absolute;
  left: 26px;
  top: 61px;
  width: 4px;
  height: 4px;
  border-radius: 50%;
  background: #b0b0b0;
}
.sep { width: 1px; height: 49px; margin: 9px 11px 0 13px; background: #5c5c5c; }
.badge { font: 400 14px Inter, sans-serif; fill: #fff; text-anchor: middle; letter-spacing: -.4px; }
.long { font: 400 12px "Noto Sans", sans-serif; letter-spacing: -.5px; }
.term { font: 700 12px "Liberation Mono", monospace; fill: #00a51b; }
.tee { font: 400 28px "Liberation Serif", serif; fill: #111; text-anchor: middle; }
.slack { font: 800 22px Lato, sans-serif; fill: #14151b; text-anchor: middle; }
.txt { font: 400 7.500px Inter, sans-serif; fill: #777; text-anchor: middle; }
```
